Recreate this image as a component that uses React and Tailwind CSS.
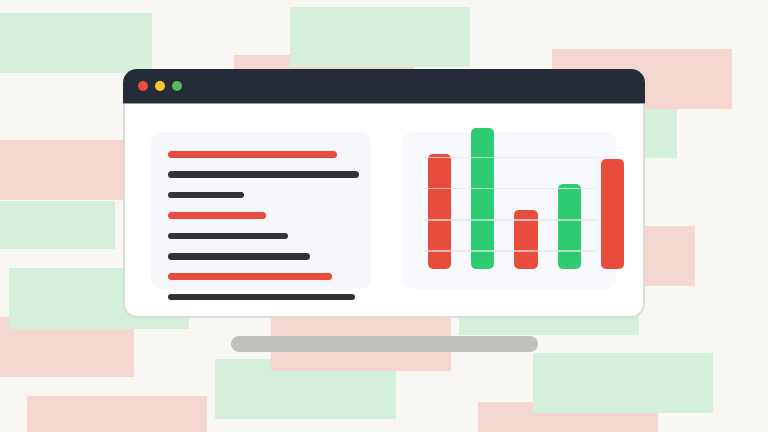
import React from 'react';

// soft blocks scattered behind the browser window (order = paint order)
const blocks = [
  'left-[234px] top-[55px] w-[180px] h-[60px] bg-[#f5d6d0]',
  'left-[-28px] top-[13px] w-[180px] h-[60px] bg-[#d4efdb]',
  'left-[290px] top-[7px] w-[180px] h-[60px] bg-[#d4efdb]',
  'left-[497px] top-[98px] w-[180px] h-[60px] bg-[#d4efdb]',
  'left-[552px] top-[49px] w-[180px] h-[60px] bg-[#f5d6d0]',
  'left-[-57px] top-[140px] w-[180px] h-[60px] bg-[#f5d6d0]',
  'left-[-65px] top-[201px] w-[180px] h-[48px] bg-[#d4efdb]',
  'left-[515px] top-[226px] w-[180px] h-[60px] bg-[#f5d6d0]',
  'left-[-46px] top-[317px] w-[180px] h-[60px] bg-[#f5d6d0]',
  'left-[9px] top-[268px] w-[180px] h-[61px] bg-[#d4efdb]',
  'left-[459px] top-[275px] w-[180px] h-[60px] bg-[#d4efdb]',
  'left-[215px] top-[359px] w-[181px] h-[60px] bg-[#d4efdb]',
  'left-[271px] top-[311px] w-[180px] h-[60px] bg-[#f5d6d0]',
  'left-[27px] top-[396px] w-[180px] h-[60px] bg-[#f5d6d0]',
  'left-[478px] top-[402px] w-[180px] h-[60px] bg-[#f5d6d0]',
  'left-[533px] top-[353px] w-[180px] h-[60px] bg-[#d4efdb]',
];

// fake text lines in the document panel
const lines = [
  'w-[169px] bg-[#e74c3c]',
  'w-[191px] bg-[#333333]',
  'w-[76px] bg-[#333333]',
  'w-[98px] bg-[#e74c3c]',
  'w-[120px] bg-[#333333]',
  'w-[142px] bg-[#333333]',
  'w-[164px] bg-[#e74c3c]',
  'w-[187px] bg-[#333333]',
];

const bars = [
  'h-[115px] bg-[#e74c3c]',
  'h-[141px] bg-[#2ecc71]',
  'h-[59px] bg-[#e74c3c]',
  'h-[85px] bg-[#2ecc71]',
  'h-[110px] bg-[#e74c3c]',
];

const DocPanel = () => (
  <div className="w-[220px] h-[157px] shrink-0 rounded-[10px] bg-[#f6f7fb] pt-[19px] pl-[17px] flex flex-col gap-[13.7px]">
    {lines.map((cls, i) => (
      <div key={i} className={`h-[6.7px] shrink-0 rounded-full ${cls}`} />
    ))}
  </div>
);

const ChartPanel = () => (
  <div className="relative w-[214px] h-[157px] shrink-0 rounded-[10px] bg-[#f8f9fc]">
    <div className="flex items-end h-full pl-[25.7px] pb-[19.7px] gap-[20px]">
      {bars.map((cls, i) => (
        <div key={i} className={`w-[23.3px] shrink-0 rounded-[5px] ${cls}`} />
      ))}
    </div>
    {/* grid lines sit on top of the bars */}
    <div className="absolute left-[21px] top-[24.6px] w-[174px] flex flex-col gap-[29.8px]">
      {[0, 1, 2, 3].map((i) => (
        <div key={i} className="h-[1.5px] bg-[#e4e6ee]/70" />
      ))}
    </div>
  </div>
);

export default function App() {
  return (
    <div className="relative w-[768px] h-[432px] overflow-hidden bg-[#f8f7f3]">
      {blocks.map((cls, i) => (
        <div key={i} className={`absolute ${cls}`} />
      ))}

      <div className="relative z-10 flex flex-col items-center pt-[69px]">
        {/* browser window */}
        <div className="w-[522px] rounded-[14px] overflow-hidden">
          <div className="h-[35px] bg-[#252c37] border-b border-[#9aa0a6] flex items-center pl-[15px] gap-[7px]">
            <span className="w-[10px] h-[10px] rounded-full bg-[#e74c3c]" />
            <span className="w-[10px] h-[10px] rounded-full bg-[#fbc52d]" />
            <span className="w-[10px] h-[10px] rounded-full bg-[#5cb85c]" />
          </div>
          <div className="bg-white border-2 border-t-0 border-[#dedbd6] rounded-b-[14px] pl-[26px] pt-[28px] pb-[27px] flex gap-[31px]">
            <DocPanel />
            <ChartPanel />
          </div>
        </div>

        {/* stand */}
        <div className="mt-[18px] w-[307px] h-[16px] rounded-full bg-[#c2c0bb]" />
      </div>
    </div>
  );
}
